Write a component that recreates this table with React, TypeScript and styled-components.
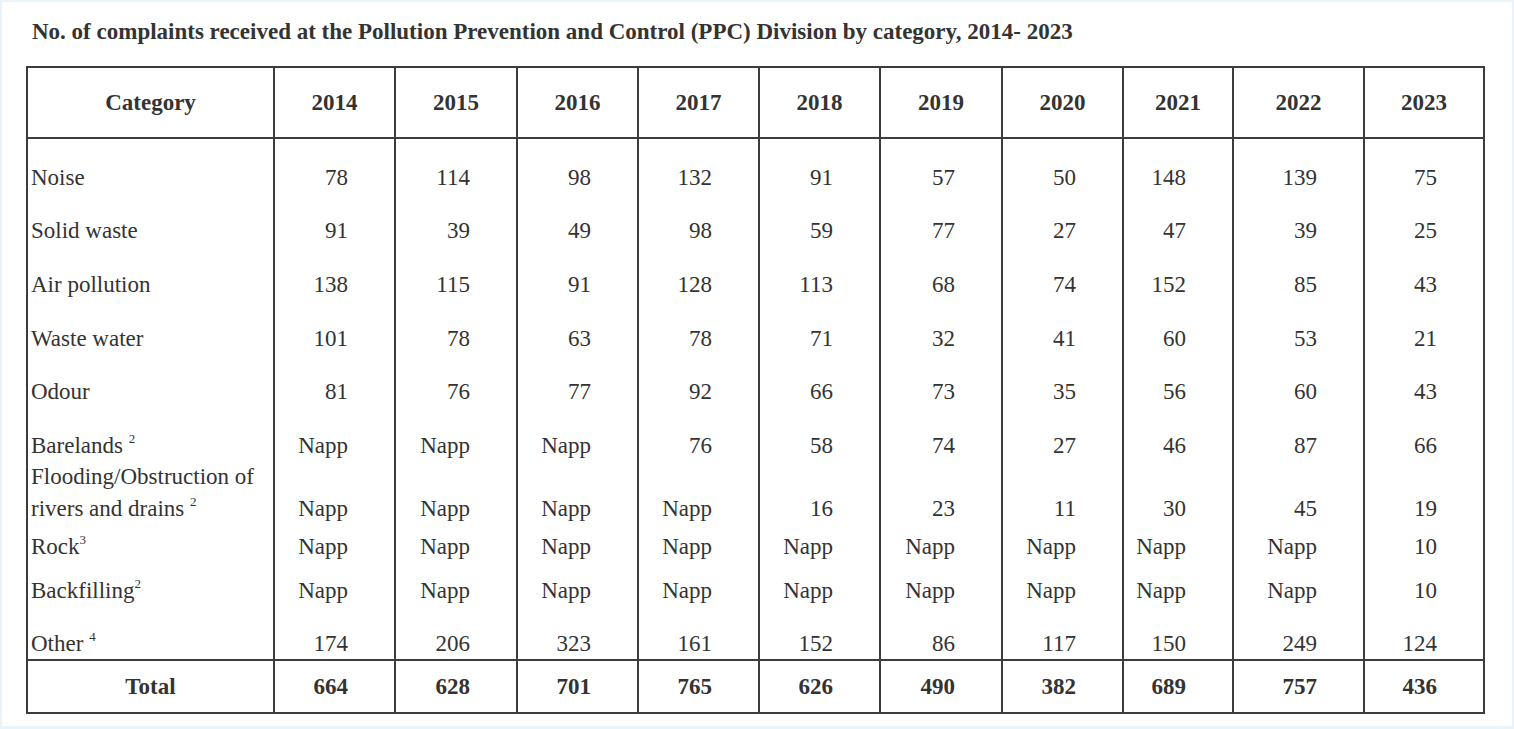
import React from "react";
import styled, { createGlobalStyle } from "styled-components";

const GlobalStyle = createGlobalStyle`
  html, body {
    margin: 0;
    padding: 0;
    background: #e8f4fa;
  }
  body {
    font-family: "Liberation Serif", "Times New Roman", serif;
    color: #333;
  }
`;

const Panel = styled.div`
  margin: 2px;
  height: 724px;
  box-sizing: border-box;
  background: #ffffff;
  padding: 17px 24px 0 24px;
`;

const Title = styled.h1`
  margin: 0 0 21px 6px;
  font-size: 23px;
  line-height: 26px;
  font-weight: 700;
  color: #333;
  white-space: nowrap;
`;

const Table = styled.table`
  border-collapse: collapse;
  table-layout: fixed;
  width: 1459px;
  font-size: 23px;
  color: #333;

  td,
  th {
    border-left: 2px solid #3c3c3c;
    border-right: 2px solid #3c3c3c;
    padding: 0;
  }
`;

const HeadCell = styled.th`
  height: 69px;
  border: 2px solid #3c3c3c;
  text-align: center;
  vertical-align: middle;
  font-weight: 700;
`;

const BodyRow = styled.tr<{ $h: number; $lh: number }>`
  height: ${({ $h }) => $h}px;

  td {
    vertical-align: bottom;
    line-height: ${({ $lh }) => $lh}px;
  }
`;

const LabelCell = styled.td`
  text-align: left;
  padding-left: 3px !important;
  white-space: nowrap;
`;

const NumCell = styled.td`
  text-align: right;
  padding-right: 46px !important;
`;

const Sup = styled.sup`
  font-size: 13px;
  line-height: 0;
  vertical-align: 10px;
`;

const TotalLabel = styled.td`
  height: 51px;
  border: 2px solid #3c3c3c;
  text-align: center;
  vertical-align: middle;
  font-weight: 700;
`;

const TotalCell = styled.td`
  border: 2px solid #3c3c3c;
  text-align: right;
  vertical-align: middle;
  font-weight: 700;
  padding-right: 46px !important;
`;

type Row = {
  label: React.ReactNode;
  values: (number | string)[];
  h: number;
  lh?: number;
};

const YEARS = [2014, 2015, 2016, 2017, 2018, 2019, 2020, 2021, 2022, 2023];
const COL_WIDTHS = [247, 121, 122, 121, 121, 121, 122, 121, 110, 131, 120];

const ROWS: Row[] = [
  { label: "Noise", values: [78, 114, 98, 132, 91, 57, 50, 148, 139, 75], h: 55 },
  { label: "Solid waste", values: [91, 39, 49, 98, 59, 77, 27, 47, 39, 25], h: 53 },
  { label: "Air pollution", values: [138, 115, 91, 128, 113, 68, 74, 152, 85, 43], h: 54 },
  { label: "Waste water", values: [101, 78, 63, 78, 71, 32, 41, 60, 53, 21], h: 54 },
  { label: "Odour", values: [81, 76, 77, 92, 66, 73, 35, 56, 60, 43], h: 53 },
  {
    label: (
      <>
        Barelands <Sup>2</Sup>
      </>
    ),
    values: ["Napp", "Napp", "Napp", 76, 58, 74, 27, 46, 87, 66],
    h: 54,
  },
  {
    label: (
      <>
        Flooding/Obstruction of
        <br />
        rivers and drains <Sup>2</Sup>
      </>
    ),
    values: ["Napp", "Napp", "Napp", "Napp", 16, 23, 11, 30, 45, 19],
    h: 64,
    lh: 32,
  },
  {
    label: (
      <>
        Rock<Sup>3</Sup>
      </>
    ),
    values: ["Napp", "Napp", "Napp", "Napp", "Napp", "Napp", "Napp", "Napp", "Napp", 10],
    h: 37,
  },
  {
    label: (
      <>
        Backfilling<Sup>2</Sup>
      </>
    ),
    values: ["Napp", "Napp", "Napp", "Napp", "Napp", "Napp", "Napp", "Napp", "Napp", 10],
    h: 44,
  },
  {
    label: (
      <>
        Other <Sup>4</Sup>
      </>
    ),
    values: [174, 206, 323, 161, 152, 86, 117, 150, 249, 124],
    h: 54,
  },
];

const TOTALS = [664, 628, 701, 765, 626, 490, 382, 689, 757, 436];

export default function App() {
  return (
    <>
      <GlobalStyle />
      <Panel>
        <Title>
          No. of complaints received at the Pollution Prevention and Control
          (PPC) Division by category, 2014- 2023
        </Title>
        <Table>
          <colgroup>
            {COL_WIDTHS.map((w, i) => (
              <col key={i} style={{ width: w }} />
            ))}
          </colgroup>
          <thead>
            <tr>
              <HeadCell>Category</HeadCell>
              {YEARS.map((y) => (
                <HeadCell key={y}>{y}</HeadCell>
              ))}
            </tr>
          </thead>
          <tbody>
            {ROWS.map((row, i) => (
              <BodyRow key={i} $h={row.h} $lh={row.lh ?? 30}>
                <LabelCell>{row.label}</LabelCell>
                {row.values.map((v, j) => (
                  <NumCell key={j}>{v}</NumCell>
                ))}
              </BodyRow>
            ))}
          </tbody>
          <tfoot>
            <tr>
              <TotalLabel>Total</TotalLabel>
              {TOTALS.map((t, j) => (
                <TotalCell key={j}>{t}</TotalCell>
              ))}
            </tr>
          </tfoot>
        </Table>
      </Panel>
    </>
  );
}
